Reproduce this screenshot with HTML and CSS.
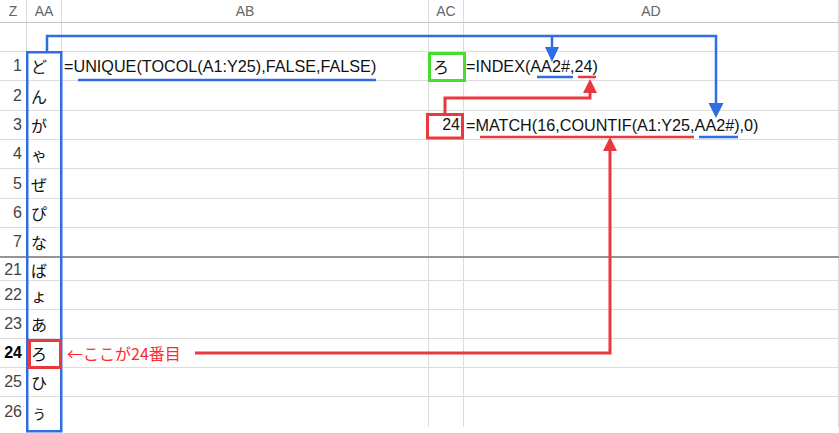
FILE: index.html
```html
<!DOCTYPE html>
<html lang="ja">
<head>
<meta charset="utf-8">
<link rel="stylesheet" href="styles.css">
</head>
<body>
<div class="sheet">
  <div class="row head">
    <div class="c rn">Z</div><div class="c">AA</div><div class="c">AB</div><div class="c">AC</div><div class="c">AD</div>
  </div>
  <div class="row r29">
    <div class="c rn"></div><div class="c"></div><div class="c"></div><div class="c"></div><div class="c"></div>
  </div>
  <div class="row r29">
    <div class="c rn">1</div><div class="c jp">ど</div><div class="c f">=UNIQUE(TOCOL(A1:Y25),FALSE,FALSE)</div><div class="c jp">ろ</div><div class="c f">=INDEX(AA2#,24)</div>
  </div>
  <div class="row r30">
    <div class="c rn">2</div><div class="c jp">ん</div><div class="c"></div><div class="c"></div><div class="c"></div>
  </div>
  <div class="row r29">
    <div class="c rn">3</div><div class="c jp">が</div><div class="c"></div><div class="c num">24</div><div class="c f">=MATCH(16,COUNTIF(A1:Y25,AA2#),0)</div>
  </div>
  <div class="row r29">
    <div class="c rn">4</div><div class="c jp">ゃ</div><div class="c"></div><div class="c"></div><div class="c"></div>
  </div>
  <div class="row r30">
    <div class="c rn">5</div><div class="c jp">ぜ</div><div class="c"></div><div class="c"></div><div class="c"></div>
  </div>
  <div class="row r29">
    <div class="c rn">6</div><div class="c jp">ぴ</div><div class="c"></div><div class="c"></div><div class="c"></div>
  </div>
  <div class="row r30 freeze">
    <div class="c rn">7</div><div class="c jp">な</div><div class="c"></div><div class="c"></div><div class="c"></div>
  </div>
  <div class="row r23">
    <div class="c rn">21</div><div class="c jp">ば</div><div class="c"></div><div class="c"></div><div class="c"></div>
  </div>
  <div class="row r29">
    <div class="c rn">22</div><div class="c jp">ょ</div><div class="c"></div><div class="c"></div><div class="c"></div>
  </div>
  <div class="row r29">
    <div class="c rn">23</div><div class="c jp">あ</div><div class="c"></div><div class="c"></div><div class="c"></div>
  </div>
  <div class="row r29">
    <div class="c rn bold">24</div><div class="c jp">ろ</div><div class="c note"><span class="note-text">←ここが24番目</span></div><div class="c"></div><div class="c"></div>
  </div>
  <div class="row r29">
    <div class="c rn">25</div><div class="c jp">ひ</div><div class="c"></div><div class="c"></div><div class="c"></div>
  </div>
  <div class="row r30 last">
    <div class="c rn">26</div><div class="c jp">ぅ</div><div class="c"></div><div class="c"></div><div class="c"></div>
  </div>

  <svg class="overlay" width="839" height="433" viewBox="0 0 839 433" xmlns="http://www.w3.org/2000/svg">
    <g fill="none" stroke="#2f6de3" stroke-width="2.5">
      <rect x="27.25" y="52.25" width="34" height="379"/>
      <polyline points="47,52 47,36 716,36 716,104"/>
      <line x1="552" y1="36" x2="552" y2="48"/>
      <line x1="78" y1="80" x2="376" y2="80"/>
      <line x1="537" y1="77" x2="573" y2="77"/>
      <line x1="699" y1="137" x2="738" y2="137"/>
    </g>
    <g fill="#2f6de3">
      <polygon points="708.5,103 723.5,103 716,118"/>
      <polygon points="545,47 559,47 552,62"/>
    </g>
    <g fill="none" stroke="#e8393e" stroke-width="3">
      <rect x="427.5" y="114.5" width="35" height="23.5"/>
      <polyline points="445,113 445,98 590,98 590,92"/>
      <polyline points="195,353 610,353 610,150"/>
      <rect x="29.5" y="340.5" width="31" height="27"/>
    </g>
    <g fill="none" stroke="#e8393e" stroke-width="2.5">
      <line x1="578" y1="77" x2="596" y2="77"/>
      <line x1="480" y1="137" x2="694" y2="137"/>
    </g>
    <g fill="#e8393e">
      <polygon points="583,93 597,93 590,79"/>
      <polygon points="603,151 617,151 610,137"/>
    </g>
    <rect x="429.5" y="53.5" width="35" height="27" fill="none" stroke="#46dc30" stroke-width="3"/>
  </svg>
</div>
</body>
</html>
```
FILE: styles.css
```css
html, body {
  margin: 0;
  padding: 0;
  background: #ffffff;
}
.sheet {
  position: relative;
  width: 839px;
  height: 433px;
  overflow: hidden;
  background: #ffffff;
  font-family: "Liberation Sans", Arial, "Noto Sans CJK JP", sans-serif;
  font-size: 16px;
  color: #111;
}
.row {
  display: grid;
  grid-template-columns: 27px 35px 367px 35px 375px;
  box-sizing: border-box;
  border-bottom: 1px solid #dcdcdc;
}
.row.head { height: 23px; border-bottom: 1px solid #c6c6c6; }
.row.r29 { height: 29px; }
.row.r30 { height: 30px; }
.row.r23 { height: 23px; }
.row.freeze { border-bottom: 2px solid #959595; }
.row.last { border-bottom: none; }
.c {
  box-sizing: border-box;
  border-right: 1px solid #dcdcdc;
  display: flex;
  align-items: center;
  white-space: nowrap;
  overflow: visible;
  padding: 0 3px;
  min-width: 0;
}
.head .c {
  justify-content: center;
  color: #666;
  font-size: 14px;
  padding: 0;
}
.rn {
  justify-content: flex-end;
  padding: 0 4px 0 0;
  color: #444;
  font-size: 16px;
}
.head .rn { justify-content: center; }
.rn.bold { font-weight: bold; color: #000; }
.jp {
  font-family: "Noto Sans CJK JP", sans-serif;
  font-size: 16px;
  padding-left: 4px;
  color: #111;
}
.f { padding-left: 2px; color: #111; font-size: 16.2px; }
.num { justify-content: flex-end; padding-right: 3px; color: #111; }
.note { padding-left: 5px; }
.note-text {
  font-family: "Noto Sans CJK JP", sans-serif;
  font-size: 16px;
  color: #ff2a2a;
}
.overlay {
  position: absolute;
  left: 0;
  top: 0;
  pointer-events: none;
}
```
